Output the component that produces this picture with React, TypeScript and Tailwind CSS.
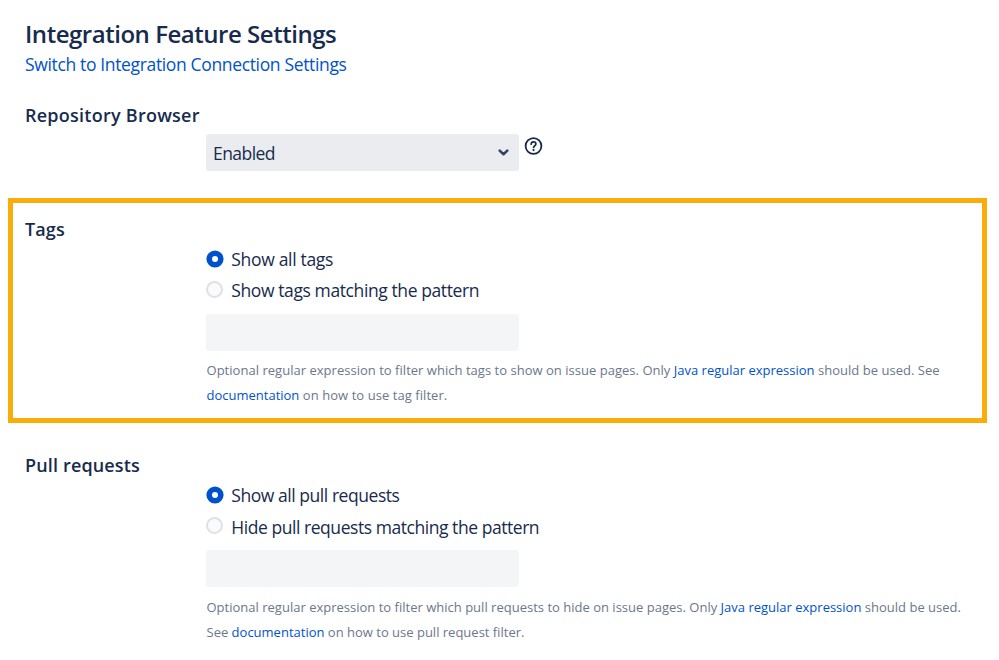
import type { ReactNode } from "react";

function SectionTitle({ children, className = "" }: { children: ReactNode; className?: string }) {
  return (
    <h2 className={`h-[22px] pl-[25px] text-[18px] leading-[22px] font-semibold text-[#172b4d] ${className}`}>
      {children}
    </h2>
  );
}

function Radio({
  checked = false,
  label,
  className = "",
  labelClass = "",
  dotClass = "mt-[3px]",
}: {
  checked?: boolean;
  label: string;
  className?: string;
  labelClass?: string;
  dotClass?: string;
}) {
  return (
    <label className={`flex h-6 items-start ${className}`}>
      {checked ? (
        <svg className={`mr-[0.5px] size-[18px] ${dotClass}`} viewBox="0 0 18 18">
          <circle cx="9" cy="9" r="8.6" fill="#0052cc" />
          <circle cx="9" cy="9" r="3" fill="#fff" />
        </svg>
      ) : (
        <span className={`mr-[1.5px] size-[17px] rounded-full border-2 border-[#dfe1e6] bg-[#fafbfc] ${dotClass}`} />
      )}
      <span className={`ml-[6.8px] text-[17.5px] leading-6 whitespace-nowrap text-[#172b4d] ${labelClass}`}>{label}</span>
    </label>
  );
}

function Link({ children }: { children: ReactNode }) {
  return <a className="tracking-normal text-[#0052cc]">{children}</a>;
}

function PatternField({ className = "" }: { className?: string }) {
  return <div className={`h-[37px] w-[313px] rounded-[3px] bg-[#f4f5f7] ${className}`} />;
}

export default function App() {
  return (
    <main className="h-[660px] w-[999px] overflow-hidden bg-white pt-[19px] font-['Open_Sans','Noto_Sans',sans-serif] text-[#172b4d]">
      <header className="pl-[25px]">
        <h1 className="h-[30px] text-[24px] leading-[30px] font-semibold tracking-[-0.47px] whitespace-nowrap">
          Integration Feature Settings
        </h1>
        <a className="mt-1 block h-[22px] text-[17.5px] leading-[22px] tracking-[-0.35px] text-[#0052cc]">
          Switch to Integration Connection Settings
        </a>
      </header>

      <section className="mt-[29px]">
        <SectionTitle className="tracking-[0.25px]">Repository Browser</SectionTitle>
        <div className="mt-2 ml-[206px] flex items-start">
          <div className="flex h-[37px] w-[313px] items-center justify-between rounded-[3px] bg-[#ebecf0] pr-[10px] pl-[7px]">
            <span className="text-[17.5px] leading-6 tracking-[-0.55px]">Enabled</span>
            <svg className="size-[11px]" viewBox="0 0 11 11" fill="none" stroke="#344563" strokeWidth="2.6" strokeLinecap="round" strokeLinejoin="round">
              <path d="M1.7 3.6 5.5 7.2 9.3 3.6" />
            </svg>
          </div>
          <svg className="mt-[3px] ml-[5px] size-[19px]" viewBox="0 0 19 19" fill="none" stroke="#172b4d" strokeLinecap="round">
            <circle cx="9.5" cy="9" r="7.9" strokeWidth="1.8" />
            <path d="M7.2 7.2C7.2 5.6 8.1 4.9 9.5 4.9s2.4.8 2.4 2.1c0 1.7-2.3 1.7-2.3 3.4" strokeWidth="1.7" />
            <circle cx="9.55" cy="13.1" r="1.1" fill="#172b4d" stroke="none" />
          </svg>
        </div>
      </section>

      <section className="mt-[27px] ml-2 h-[225px] w-[979px] border-[5px] border-[#faac0a] pt-[15px]">
        <SectionTitle className="-ml-[13px] tracking-[0.1px]">Tags</SectionTitle>
        <div className="ml-[193px]">
          <Radio checked label="Show all tags" className="mt-[7px]" labelClass="tracking-[-0.32px]" />
          <Radio label="Show tags matching the pattern" className="mt-[7px]" labelClass="tracking-[-0.4px]" />
          <PatternField className="mt-3" />
          <div className="mt-[7px] pl-[0.5px] text-[13px] leading-[25px] whitespace-nowrap text-[#6b778c]">
            <p className="tracking-[0.025px]">
              Optional regular expression to filter which tags to show on issue pages. Only <Link>Java regular expression</Link> should be used. See
            </p>
            <p className="tracking-[0.06px]">
              <Link>documentation</Link> on how to use tag filter.
            </p>
          </div>
        </div>
      </section>

      <section className="mt-[31px]">
        <SectionTitle className="tracking-[0.15px]">Pull requests</SectionTitle>
        <div className="ml-[206px]">
          <Radio checked label="Show all pull requests" className="mt-[7px]" labelClass="tracking-[-0.45px]" />
          <Radio label="Hide pull requests matching the pattern" className="mt-2" labelClass="tracking-[-0.45px]" dotClass="mt-[2px]" />
          <PatternField className="mt-[11px]" />
          <div className="mt-2 pl-[0.5px] text-[13px] leading-[25px] whitespace-nowrap text-[#6b778c]">
            <p className="tracking-[0.008px]">
              Optional regular expression to filter which pull requests to hide on issue pages. Only <Link>Java regular expression</Link> should be used.
            </p>
            <p>
              See <Link>documentation</Link> on how to use pull request filter.
            </p>
          </div>
        </div>
      </section>
    </main>
  );
}
